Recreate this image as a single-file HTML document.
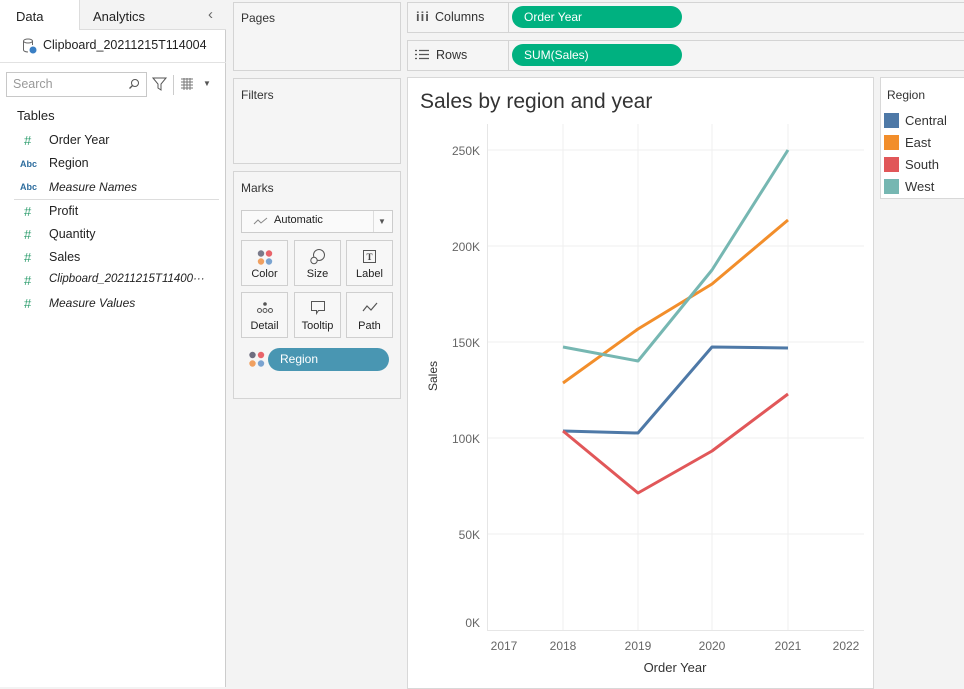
<!DOCTYPE html>
<html><head><meta charset="utf-8"><style>
*{box-sizing:border-box;margin:0;padding:0}
body{width:964px;height:687px;overflow:hidden;background:#f3f3f3;font-family:"Liberation Sans","Noto Sans CJK JP",sans-serif;font-size:12px;color:#222;position:relative}
.a{position:absolute}
.card{position:absolute;background:#f5f5f5;border:1px solid #d4d4d4}
.lbl{position:absolute;font-size:12px;color:#333}
.btn{position:absolute;width:47px;height:46px;border:1px solid #cfcfcf;background:#f7f7f7;text-align:center;font-size:11px}
.btn span{position:absolute;left:0;right:0;bottom:5px}
.hash{color:#2e9e6e;font-size:13px;position:absolute;left:24px}
.abc{color:#2e6d9e;font-size:9px;font-weight:bold;position:absolute;left:20px}
.fld{position:absolute;left:49px;font-size:12.5px}
.it{font-style:italic;font-size:12px}
.pill{position:absolute;background:#00b180;color:#fff;border-radius:11px;height:22px;line-height:22px;padding-left:12px;font-size:12px;width:170px}
</style></head><body>
<!-- left panel -->
<div class="a" style="left:0;top:0;width:226px;height:687px;background:#fff;border-right:1px solid #ccc"></div>
<div class="a" style="left:79px;top:0;width:147px;height:30px;background:#f3f3f3;border-left:1px solid #ddd;border-bottom:1px solid #ddd"></div>
<div class="lbl" style="left:16px;top:9px;font-size:13px;color:#222">Data</div>
<div class="lbl" style="left:93px;top:9px;font-size:13px;color:#222">Analytics</div>
<div class="lbl" style="left:208px;top:6px;font-size:15px;color:#666">‹</div>
<svg class="a" style="left:22px;top:38px" width="16" height="16"><ellipse cx="6" cy="3" rx="4.5" ry="2" fill="none" stroke="#666"/><path d="M1.5 3v9c0 1 2 2 4.5 2" fill="none" stroke="#666"/><path d="M10.5 3v4" stroke="#666"/><circle cx="11" cy="12" r="3.5" fill="#3a7fc4"/></svg>
<div class="lbl" style="left:43px;top:38px;font-size:12.5px;color:#222">Clipboard_20211215T114004</div>
<div class="a" style="left:0;top:62px;width:226px;height:1px;background:#e2e2e2"></div>
<div class="a" style="left:6px;top:72px;width:141px;height:25px;border:1px solid #c8c8c8;background:#fff"></div>
<div class="lbl" style="left:13px;top:77px;color:#999;font-size:12.5px">Search</div>
<svg class="a" style="left:128px;top:78px" width="12" height="12"><circle cx="7" cy="5" r="3.5" fill="none" stroke="#555"/><path d="M4.5 7.5L1.5 10.5" stroke="#555" stroke-width="1.3"/></svg>
<svg class="a" style="left:152px;top:76px" width="16" height="16"><path d="M1 2h13l-5 6v6l-3-2V8z" fill="none" stroke="#555"/></svg>
<div class="a" style="left:173px;top:75px;width:1px;height:20px;background:#ccc"></div>
<svg class="a" style="left:180px;top:78px" width="14" height="12"><path d="M1 1h12M1 4h12M1 7h12M1 10h12M4 0v12M7 0v12M10 0v12" stroke="#777" stroke-width="1"/></svg>
<div class="lbl" style="left:203px;top:79px;font-size:8px;color:#555">▼</div>
<div class="lbl" style="left:17px;top:108px;font-size:13px;color:#222">Tables</div>
<div class="hash" style="top:133px">#</div><div class="fld" style="top:133px">Order Year</div>
<div class="abc" style="top:159px">Abc</div><div class="fld" style="top:156px">Region</div>
<div class="abc" style="top:182px">Abc</div><div class="fld it" style="top:180px">Measure Names</div>
<div class="a" style="left:14px;top:199px;width:205px;height:1px;background:#ddd"></div>
<div class="hash" style="top:204px">#</div><div class="fld" style="top:204px">Profit</div>
<div class="hash" style="top:227px">#</div><div class="fld" style="top:227px">Quantity</div>
<div class="hash" style="top:250px">#</div><div class="fld" style="top:250px">Sales</div>
<div class="hash" style="top:273px">#</div><div class="fld it" style="top:273px;font-size:11.5px">Clipboard_20211215T11400···</div>
<div class="hash" style="top:296px">#</div><div class="fld it" style="top:296px">Measure Values</div>

<!-- middle cards -->
<div class="card" style="left:233px;top:2px;width:168px;height:69px"></div>
<div class="lbl" style="left:241px;top:11px">Pages</div>
<div class="card" style="left:233px;top:78px;width:168px;height:86px"></div>
<div class="lbl" style="left:241px;top:88px">Filters</div>
<div class="card" style="left:233px;top:171px;width:168px;height:228px"></div>
<div class="lbl" style="left:241px;top:181px">Marks</div>
<div class="a" style="left:241px;top:210px;width:152px;height:23px;border:1px solid #ccc;background:#fafafa"></div>
<div class="a" style="left:373px;top:211px;width:1px;height:21px;background:#ddd"></div>
<svg class="a" style="left:253px;top:215px" width="16" height="12"><path d="M1 9l4-4 3 3 6-5" fill="none" stroke="#888"/></svg>
<div class="lbl" style="left:274px;top:214px;font-size:11px;color:#222">Automatic</div>
<div class="lbl" style="left:378px;top:217px;font-size:8px;color:#555">▼</div>
<div class="btn" style="left:241px;top:240px"><svg class="a" style="left:14px;top:8px" width="18" height="18"><circle cx="5" cy="4.5" r="3.2" fill="#7a7a8a"/><circle cx="13" cy="4.5" r="3.2" fill="#e8646a"/><circle cx="5" cy="12.5" r="3.2" fill="#f0a060"/><circle cx="13" cy="12.5" r="3.2" fill="#7aa3d0"/></svg><span>Color</span></div>
<div class="btn" style="left:294px;top:240px"><svg class="a" style="left:14px;top:7px" width="18" height="18"><circle cx="10" cy="7" r="5.5" fill="none" stroke="#555"/><circle cx="5" cy="12.5" r="3.2" fill="#f7f7f7" stroke="#555"/></svg><span>Size</span></div>
<div class="btn" style="left:346px;top:240px"><svg class="a" style="left:15px;top:8px" width="16" height="16"><rect x="1.5" y="1.5" width="12" height="12" fill="none" stroke="#555"/><text x="7.5" y="11" font-size="9" text-anchor="middle" font-family="Liberation Serif" font-weight="bold" fill="#444">T</text></svg><span>Label</span></div>
<div class="btn" style="left:241px;top:292px"><svg class="a" style="left:14px;top:8px" width="18" height="14"><circle cx="9" cy="3" r="1.8" fill="#555"/><circle cx="3.5" cy="9.5" r="2" fill="none" stroke="#555"/><circle cx="9" cy="9.5" r="2" fill="none" stroke="#555"/><circle cx="14.5" cy="9.5" r="2" fill="none" stroke="#555"/></svg><span>Detail</span></div>
<div class="btn" style="left:294px;top:292px"><svg class="a" style="left:15px;top:7px" width="18" height="16"><path d="M1.5 1.5h13v9h-6l-2 3v-3h-5z" fill="none" stroke="#555"/></svg><span>Tooltip</span></div>
<div class="btn" style="left:346px;top:292px"><svg class="a" style="left:15px;top:8px" width="18" height="14"><path d="M1 10l4-5 4 4 6-7" fill="none" stroke="#555" stroke-width="1.2"/></svg><span>Path</span></div>
<svg class="a" style="left:248px;top:351px" width="18" height="18"><circle cx="4.5" cy="4" r="3.2" fill="#6e6e80"/><circle cx="13" cy="4" r="3.2" fill="#e8646a"/><circle cx="4.5" cy="12.5" r="3.2" fill="#f0a060"/><circle cx="13" cy="12.5" r="3.2" fill="#7aa3d0"/></svg>
<div class="a" style="left:268px;top:348px;width:121px;height:23px;border-radius:12px;background:#4996b2;color:#fff;line-height:23px;padding-left:12px;font-size:12px">Region</div>

<!-- shelves -->
<div class="card" style="left:407px;top:2px;width:560px;height:31px;background:#f5f5f5"></div>
<div class="a" style="left:508px;top:3px;width:1px;height:29px;background:#d4d4d4"></div>
<div class="lbl" style="left:416px;top:9px;font-weight:bold;font-size:13px;color:#555;letter-spacing:1px">iii</div>
<div class="lbl" style="left:435px;top:10px;font-size:12.5px">Columns</div>
<div class="pill" style="left:512px;top:6px">Order Year</div>
<div class="card" style="left:407px;top:40px;width:560px;height:31px"></div>
<div class="a" style="left:508px;top:41px;width:1px;height:29px;background:#d4d4d4"></div>
<svg class="a" style="left:415px;top:49px" width="14" height="12"><path d="M0 1.5h2M4 1.5h10M0 5.5h2M4 5.5h10M0 9.5h2M4 9.5h10" stroke="#555" stroke-width="1.3"/></svg>
<div class="lbl" style="left:436px;top:48px;font-size:12.5px">Rows</div>
<div class="pill" style="left:512px;top:44px">SUM(Sales)</div>

<!-- chart -->
<div class="a" style="left:407px;top:77px;width:467px;height:612px;background:#fff;border:1px solid #d8d8d8"></div>
<div class="lbl" style="left:420px;top:90px;font-size:21px;color:#333">Sales by region and year</div>
<svg class="a" style="left:0;top:0" width="964" height="687" font-family="Liberation Sans" font-size="12" fill="#666">
<g stroke="#efefef" stroke-width="1">
<path d="M487 150H864M487 246H864M487 342H864M487 438H864M487 534H864"/>
<path d="M563 124V630M638 124V630M712 124V630M788 124V630"/>
</g>
<path d="M487.5 124V630M487 630.5H864" stroke="#e6e6e6"/>
<g text-anchor="end"><text x="480" y="155">250K</text><text x="480" y="251">200K</text><text x="480" y="347">150K</text><text x="480" y="443">100K</text><text x="480" y="539">50K</text><text x="480" y="627">0K</text></g>
<g text-anchor="middle"><text x="504" y="650">2017</text><text x="563" y="650">2018</text><text x="638" y="650">2019</text><text x="712" y="650">2020</text><text x="788" y="650">2021</text><text x="846" y="650">2022</text>
<text x="675" y="672" fill="#333" font-size="13">Order Year</text></g>
<text x="0" y="0" transform="translate(437,376) rotate(-90)" text-anchor="middle" fill="#333" font-size="12">Sales</text>
<g fill="none" stroke-width="3" stroke-linejoin="round">
<polyline points="563,431 638,433 712,347 788,348" stroke="#4e79a7"/>
<polyline points="563,383 638,329 712,284 788,220" stroke="#f28e2b"/>
<polyline points="563,431 638,493 712,451 788,394" stroke="#e15759"/>
<polyline points="563,347 638,361 712,270 788,150" stroke="#76b7b2"/>
</g>
</svg>

<!-- legend -->
<div class="a" style="left:880px;top:77px;width:90px;height:122px;background:#fff;border:1px solid #d8d8d8"></div>
<div class="lbl" style="left:887px;top:88px;font-size:12px">Region</div>
<div class="a" style="left:884px;top:113px;width:15px;height:15px;background:#4e79a7"></div><div class="lbl" style="left:905px;top:113px;font-size:13px">Central</div>
<div class="a" style="left:884px;top:135px;width:15px;height:15px;background:#f28e2b"></div><div class="lbl" style="left:905px;top:135px;font-size:13px">East</div>
<div class="a" style="left:884px;top:157px;width:15px;height:15px;background:#e15759"></div><div class="lbl" style="left:905px;top:157px;font-size:13px">South</div>
<div class="a" style="left:884px;top:179px;width:15px;height:15px;background:#76b7b2"></div><div class="lbl" style="left:905px;top:179px;font-size:13px">West</div>
</body></html>
